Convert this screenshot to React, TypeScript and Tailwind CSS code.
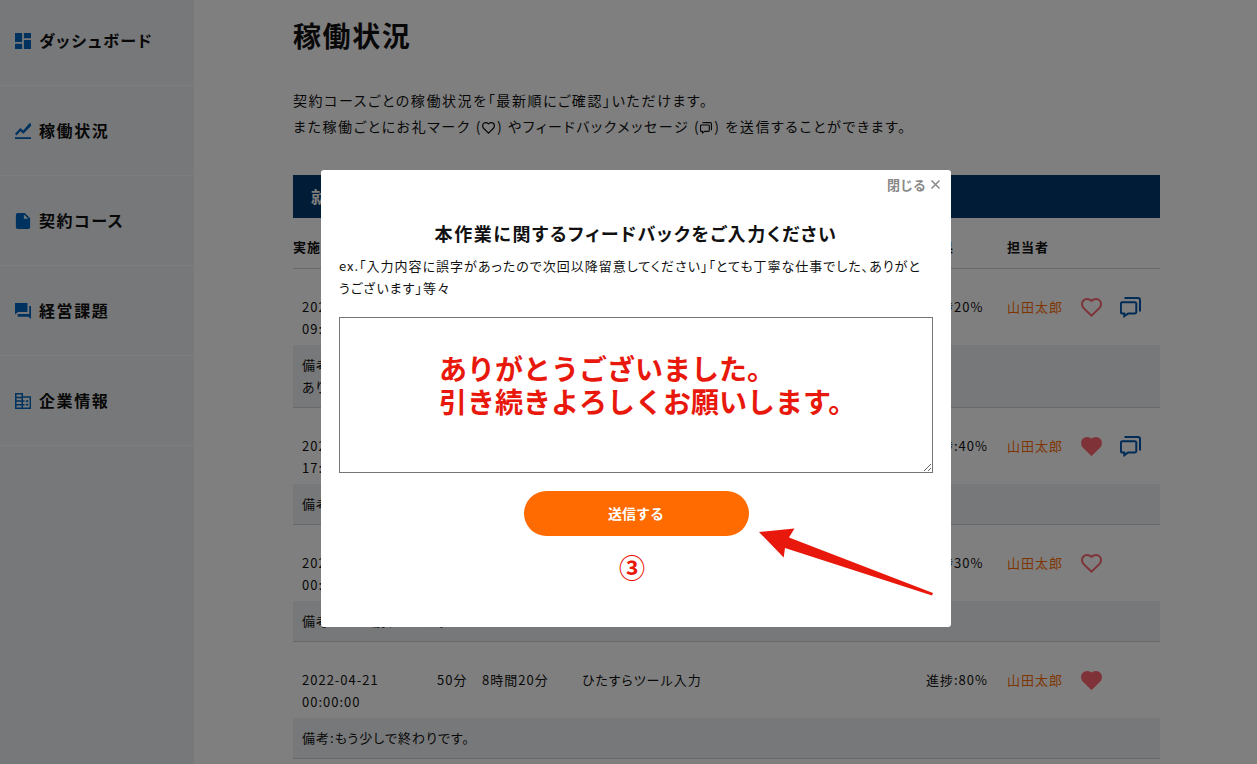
import { Fragment } from "react";
import type { ReactNode } from "react";
import { clsx } from "clsx";

interface WorkLog {
  date: string;
  time: string;
  duration: string;
  total: string;
  task: string;
  progress: string;
  staff: string;
  liked: boolean;
  message: boolean;
  note: Array<string>;
}

const logs: Array<WorkLog> = [
  {
    date: "2022-04-24",
    time: "09:00:00",
    duration: "60分",
    total: "10時間",
    task: "データ入力",
    progress: "進捗20%",
    staff: "山田太郎",
    liked: false,
    message: true,
    note: ["備考:", "ありがとうございました。"],
  },
  {
    date: "2022-04-23",
    time: "17:00:00",
    duration: "30分",
    total: "9時間",
    task: "データ入力",
    progress: "進捗:40%",
    staff: "山田太郎",
    liked: true,
    message: true,
    note: ["備考:順調です。"],
  },
  {
    date: "2022-04-22",
    time: "00:00:00",
    duration: "40分",
    total: "8時間40分",
    task: "ツール入力",
    progress: "進捗30%",
    staff: "山田太郎",
    liked: false,
    message: false,
    note: ["備考:とても疲れました。"],
  },
  {
    date: "2022-04-21",
    time: "00:00:00",
    duration: "50分",
    total: "8時間20分",
    task: "ひたすらツール入力",
    progress: "進捗:80%",
    staff: "山田太郎",
    liked: true,
    message: false,
    note: ["備考:もう少しで終わりです。"],
  },
];

function NavIcon({ children }: { children: ReactNode }) {
  return (
    <svg viewBox="3 3 18 18" className="size-4 shrink-0 fill-[#0064be]" aria-hidden="true">
      {children}
    </svg>
  );
}

const navItems = [
  {
    label: "ダッシュボード",
    icon: <path d="M3 13h8V3H3v10zm0 8h8v-6H3v6zm10 0h8V11h-8v10zm0-18v6h8V3h-8z" />,
  },
  {
    label: "稼働状況",
    icon: (
      <>
        <path d="M3 19h18v2H3z" />
        <path d="M4.600 17 3 15.200l6-6.600 3.200 2.900L19.200 3.200 21 3.600v2.800l-8.600 8.800-3.200-3z" />
      </>
    ),
  },
  {
    label: "契約コース",
    icon: <path d="M6 3a2 2 0 0 0-2 2v14a2 2 0 0 0 2 2h12a2 2 0 0 0 2-2V9l-6-6H6zm7 6.500V4.600l5 4.900h-5z" />,
  },
  {
    label: "経営課題",
    icon: <path d="M21 6.500h-2v9H6v2c0 .55.45 1 1 1h11l3 2.500V6.500zM17 12V3H3v13l3.500-3H17z" />,
  },
  {
    label: "企業情報",
    icon: (
      <path
        fillRule="evenodd"
        d="M3 3v18h18V6.600h-9V3H3zm1.700 1.700h5.600v2.400H4.700V4.700zm0 4.100h5.600v2.400H4.700V8.800zm0 4.100h5.600v2.400H4.700v-2.400zm0 4.100h5.600v2.300H4.700V17zM12 8.400h7.400v10.900H12v-2.300h1.800v-1.700H12v-2.400h1.800v-1.700H12V8.400zm3.200 2.800h2.700v2h-2.700v-2zm0 3.900h2.700v2h-2.700v-2z"
      />
    ),
  },
];

function Heart({ filled, className }: { filled?: boolean; className?: string }) {
  return (
    <svg
      viewBox="0 0 21 19"
      className={clsx(filled ? "fill-current" : "fill-none", className)}
      stroke="currentColor"
      strokeWidth="2"
      aria-hidden="true"
    >
      <path d="M10.500 2.800C11.800 1.600 13.500 1 15 1c2.900 0 5 2.200 5 5 0 1.900-.8 3.300-1.900 4.400L10.500 17.700 2.900 10.400C1.800 9.300 1 7.900 1 6c0-2.800 2.100-5 5-5 1.500 0 3.200.6 4.500 1.800Z" />
    </svg>
  );
}

function Messages({ className }: { className?: string }) {
  return (
    <svg
      viewBox="0 0 21 21"
      className={className}
      fill="none"
      stroke="currentColor"
      strokeWidth="2"
      aria-hidden="true"
    >
      <path d="M4.500 1H18a2 2 0 0 1 2 2v11.500" />
      <path d="M2.300 5.200h12.600a1.400 1.400 0 0 1 1.400 1.400v8.400a1.400 1.400 0 0 1-1.400 1.400H8.200L4.300 19.200v-2.800h-2a1.400 1.400 0 0 1-1.400-1.400V6.600a1.400 1.400 0 0 1 1.400-1.400Z" />
    </svg>
  );
}

function Sidebar() {
  return (
    <nav className="w-[194px] shrink-0 bg-[#eef0f3]">
      <ul className="-mt-1">
        {navItems.map((item) => (
          <li key={item.label} className="border-b border-[#fdfdfd]">
            <a href="#" className="flex h-[89px] items-center gap-2 pl-[15px] text-base font-bold">
              <NavIcon>{item.icon}</NavIcon>
              <span className="pb-0.5">{item.label}</span>
            </a>
          </li>
        ))}
      </ul>
    </nav>
  );
}

function WorkTable() {
  return (
    <table className="w-full table-fixed border-separate border-spacing-0 text-left text-[13px] leading-[22px] tracking-[1px]">
      <colgroup>
        <col className="w-36" />
        <col className="w-[45px]" />
        <col className="w-[100px]" />
        <col />
        <col className="w-[81px]" />
        <col className="w-[74px]" />
        <col className="w-[39px]" />
        <col className="w-10" />
      </colgroup>
      <thead>
        <tr className="[&>th]:h-[51px] [&>th]:border-b [&>th]:border-[#d0d0d0] [&>th]:pt-2">
          <th>実施日時</th>
          <th colSpan={2}>作業時間</th>
          <th>作業内容</th>
          <th>結果</th>
          <th colSpan={3}>担当者</th>
        </tr>
      </thead>
      <tbody>
        {logs.map((log) => (
          <Fragment key={log.date}>
            <tr className="align-top [&>td]:pt-[27px] [&>td]:pb-[5px]">
              <td className="pl-[9px]">
                {log.date}
                <br />
                {log.time}
              </td>
              <td>{log.duration}</td>
              <td>{log.total}</td>
              <td>{log.task}</td>
              <td>{log.progress}</td>
              <td>
                <a href="#" className="text-[#ff6b00]">
                  {log.staff}
                </a>
              </td>
              <td>
                <button type="button" aria-label="お礼" className="flex h-[22px] items-center text-[#ff6670]">
                  <Heart filled={log.liked} className="h-[19px] w-[21px]" />
                </button>
              </td>
              <td>
                {log.message && (
                  <button
                    type="button"
                    aria-label="フィードバック"
                    className="flex h-[22px] items-center text-[#0056ac]"
                  >
                    <Messages className="size-[21px]" />
                  </button>
                )}
              </td>
            </tr>
            <tr>
              <td colSpan={8} className="border-b border-[#d0d0d0] bg-[#eef0f3] px-[9px] py-[9px]">
                {log.note.map((line) => (
                  <p key={line}>{line}</p>
                ))}
              </td>
            </tr>
          </Fragment>
        ))}
      </tbody>
    </table>
  );
}

function FeedbackDialog() {
  return (
    <div className="fixed inset-0 flex items-center justify-center bg-black/50 pt-8 pl-[15px]">
      <div
        role="dialog"
        aria-modal="true"
        aria-labelledby="feedback-title"
        className="relative flex w-[630px] flex-col rounded-[3px] bg-white px-[18px] pt-1 pb-10"
      >
        <button
          type="button"
          className="-mr-2 flex h-[22px] items-center gap-1 self-end text-[13px] font-bold tracking-normal text-[#888] [font-feature-settings:normal]"
        >
          閉じる
          <svg viewBox="0 0 11 11" className="size-[11px] stroke-current" strokeWidth="1.500" aria-hidden="true">
            <path d="M1.500 1.500 9.500 9.500M9.500 1.500 1.500 9.500" />
          </svg>
        </button>
        <h2 id="feedback-title" className="mt-6 text-center text-lg leading-[27px] font-bold">
          本作業に関するフィードバックをご入力ください
        </h2>
        <p className="mt-2 pr-2 text-[13px] leading-[22px] tracking-[1px]">
          ex.「入力内容に誤字があったので次回以降留意してください」「とても丁寧な仕事でした、ありがとうございます」等々
        </p>
        <textarea
          aria-label="フィードバック"
          className="mt-[18px] block h-[156px] w-full border border-[#767676] pt-[34px] pl-[99px] text-[28px] leading-[33px] font-bold tracking-normal text-[#e8190c] [font-feature-settings:normal]"
          defaultValue={"ありがとうございました。\n引き続きよろしくお願いします。"}
        />
        <button
          type="submit"
          className="mt-[18px] h-[45px] w-[225px] self-center rounded-full bg-[#ff6b00] text-sm font-bold tracking-normal text-white [font-feature-settings:normal]"
        >
          送信する
        </button>
        <p className="mt-[11px] pr-2 text-center text-[26px] leading-10 font-bold tracking-normal text-[#e8190c]">
          ③
        </p>
        <svg
          viewBox="0 0 175 68"
          className="absolute right-[17px] bottom-[31px] h-[68px] w-[175px] fill-[#e8190c]"
          aria-hidden="true"
        >
          <path d="M0 4 35.500 .5 30 9.500 174 65 173 67.500 26 20 24.700 29.500Z" />
        </svg>
      </div>
    </div>
  );
}

export default function App() {
  return (
    <div className="flex min-h-screen bg-white font-['Noto_Sans_CJK_JP',sans-serif] tracking-widest text-[#111] [font-feature-settings:'palt']">
      <Sidebar />
      <main className="min-w-0 flex-1 pt-[14px] pr-[97px] pl-[99px]">
        <h1 className="text-[28px] leading-[42px] font-bold">稼働状況</h1>
        <p className="mt-[31px] text-sm leading-[26px]">
          契約コースごとの稼働状況を「最新順にご確認」いただけます。
          <br />
          また稼働ごとにお礼マーク (<Heart className="mr-0.5 inline h-3 w-[13px]" />
          ) やフィードバックメッセージ (<Messages className="mr-0.5 inline size-3" />) を送信することができます。
        </p>
        <h2 className="mt-9 bg-[#00386c] px-[18px] text-base leading-[43px] font-bold tracking-normal text-white">
          就労支援コース
        </h2>
        <WorkTable />
      </main>
      <FeedbackDialog />
    </div>
  );
}
